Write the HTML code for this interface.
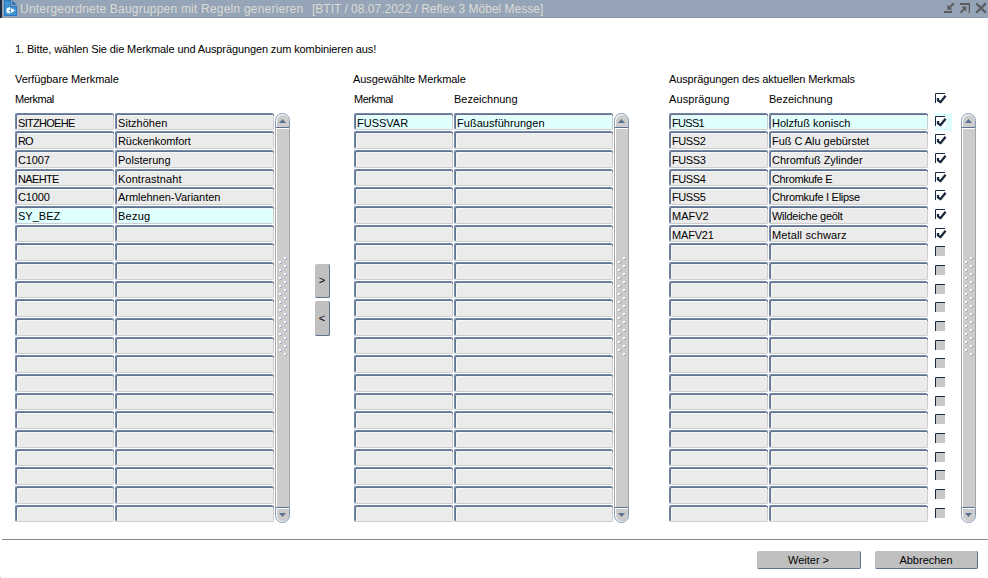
<!DOCTYPE html>
<html><head><meta charset="utf-8">
<style>
*{margin:0;padding:0;box-sizing:border-box}
html,body{width:988px;height:578px;overflow:hidden;background:#fff}
body{position:relative;font-family:"Liberation Sans",sans-serif;font-size:11px;color:#000}
.t{position:absolute;white-space:nowrap;line-height:13px}
.f{position:absolute;height:17px;border-top:1px solid #7589a6;border-left:1px solid #7589a6;border-right:1px solid #cdcdcd;border-bottom:1px solid #cdcdcd;border-radius:2px;padding-left:2px;padding-top:2px;line-height:14px;white-space:nowrap;box-shadow:inset 1px 1px 0 #5e7495, inset 2px 2px 0 #f7f7f7}
.f::after{content:'';position:absolute;right:-1px;top:0px;width:1px;height:2px;background:#5e7495;opacity:.8}
.sb{position:absolute;top:113px;width:15px;height:410px}
.sb svg{display:block}
.cb{position:absolute}
.btn{position:absolute;background:#c0c0c0;border-right:1px solid #5d7392;border-bottom:1px solid #5d7392;border-radius:2px;text-align:center;white-space:nowrap}
</style></head><body>

<div style="position:absolute;left:0;top:0;width:988px;height:17px;background:#95a4b7"></div>
<div style="position:absolute;left:0;top:17px;width:988px;height:1px;background:#8c9cb0"></div>
<div style="position:absolute;left:0;top:0;width:2px;height:18px;background:#1f2a40"></div>
<svg style="position:absolute;left:4px;top:0" width="14" height="16" viewBox="0 0 14 16"><path d="M0 0 H7 V6 H13 V16 H0 Z" fill="#2a78bc"/><path d="M1 1 H6 V7 H12 V15 H1 Z" fill="#3e93d5"/><path d="M8 0 L13 5 H8 Z" fill="#2a78bc"/><defs><clipPath id="gc"><rect x="0" y="0" width="6.2" height="16"/></clipPath></defs><g fill="#fff" clip-path="url(#gc)"><circle cx="5.3" cy="10.4" r="2.6"/><rect x="4.7" y="7.1" width="1.2" height="1.5" transform="rotate(0 5.3 10.4)"/><rect x="4.7" y="7.1" width="1.2" height="1.5" transform="rotate(-45 5.3 10.4)"/><rect x="4.7" y="7.1" width="1.2" height="1.5" transform="rotate(-90 5.3 10.4)"/><rect x="4.7" y="7.1" width="1.2" height="1.5" transform="rotate(-135 5.3 10.4)"/><rect x="4.7" y="7.1" width="1.2" height="1.5" transform="rotate(180 5.3 10.4)"/></g><circle cx="5.4" cy="10.4" r="0.75" fill="#3e93d5"/><path d="M7 8 L11 10.5 L7 13 Z" fill="#fff"/></svg>
<div class="t" style="left:20px;top:2px;font-size:12px;line-height:15px;color:#dcdcd4;letter-spacing:0.21px;">Untergeordnete Baugruppen mit Regeln generieren</div>
<div class="t" style="left:312px;top:2px;font-size:12px;line-height:15px;color:#dcdcd4;">[BTIT / 08.07.2022 / Reflex 3 Möbel Messe]</div>
<svg style="position:absolute;left:940px;top:0" width="48" height="17" viewBox="0 0 48 17"><g fill="#5c5c5c" stroke="none"><rect x="4" y="11" width="8" height="2"/><polygon points="7.3,4.6 7.3,9.7 12.4,9.7"/><rect x="20" y="3" width="10" height="2"/><rect x="28.6" y="3" width="1.4" height="10"/><polygon points="21.4,6.6 26.4,6.6 26.4,11.6"/></g><g stroke="#5c5c5c" stroke-width="2" fill="none"><path d="M13.8 3.2 L9 8"/><path d="M20.6 12.6 L25 8.2"/><path d="M36.2 3.4 L45.8 12.8 M45.8 3.4 L36.2 12.8" stroke-width="2.3"/></g></svg>
<div class="t" style="left:15px;top:43px;letter-spacing:-0.115px;">1. Bitte, wählen Sie die Merkmale und Ausprägungen zum kombinieren aus!</div>
<div class="t" style="left:15px;top:73px;letter-spacing:-0.078px;">Verfügbare Merkmale</div>
<div class="t" style="left:15px;top:93px;letter-spacing:-0.48px;">Merkmal</div>
<div class="t" style="left:353px;top:73px;letter-spacing:-0.079px;">Ausgewählte Merkmale</div>
<div class="t" style="left:354px;top:93px;letter-spacing:-0.48px;">Merkmal</div>
<div class="t" style="left:454px;top:93px;">Bezeichnung</div>
<div class="t" style="left:669px;top:73px;letter-spacing:-0.12px;">Ausprägungen des aktuellen Merkmals</div>
<div class="t" style="left:669px;top:93px;letter-spacing:0.12px;">Ausprägung</div>
<div class="t" style="left:769px;top:93px;">Bezeichnung</div>
<div class="f" style="left:15px;top:113px;width:99px;height:17px;background:#ebebeb;letter-spacing:-0.71px;">SITZHOEHE</div>
<div class="f" style="left:115px;top:113px;width:159px;height:17px;background:#ebebeb;letter-spacing:0.05px;">Sitzhöhen</div>
<div class="f" style="left:354px;top:113px;width:99px;height:17px;background:#e0ffff;">FUSSVAR</div>
<div class="f" style="left:454px;top:113px;width:159px;height:17px;background:#e0ffff;letter-spacing:0.05px;">Fußausführungen</div>
<div class="f" style="left:669px;top:113px;width:99px;height:17px;background:#e0ffff;letter-spacing:-0.7px;">FUSS1</div>
<div class="f" style="left:769px;top:113px;width:159px;height:17px;background:#e0ffff;">Holzfuß konisch</div>
<div style="position:absolute;left:935px;top:113px;width:17px;height:18px;background:#e0ffff"></div>
<svg class="cb" style="left:935px;top:116px" width="12" height="12" viewBox="0 0 12 12"><rect x="1" y="1" width="10" height="10" fill="#ffffff"/><path d="M0.5 10 V0.5 H10" fill="none" stroke="#1c2a40" stroke-width="1"/><path d="M3 5 V7.4 L5.4 9.2 L10.6 2.8" fill="none" stroke="#1c2a40" stroke-width="2.3" stroke-linejoin="round"/></svg>
<div class="f" style="left:15px;top:131px;width:99px;height:18px;background:#ebebeb;letter-spacing:-1px;">RO</div>
<div class="f" style="left:115px;top:131px;width:159px;height:18px;background:#ebebeb;letter-spacing:-0.09px;">Rückenkomfort</div>
<div class="f" style="left:354px;top:131px;width:99px;height:18px;background:#ebebeb;"></div>
<div class="f" style="left:454px;top:131px;width:159px;height:18px;background:#ebebeb;"></div>
<div class="f" style="left:669px;top:131px;width:99px;height:18px;background:#ebebeb;letter-spacing:-0.42px;">FUSS2</div>
<div class="f" style="left:769px;top:131px;width:159px;height:18px;background:#ebebeb;letter-spacing:-0.04px;">Fuß C Alu gebürstet</div>
<svg class="cb" style="left:935px;top:134px" width="12" height="12" viewBox="0 0 12 12"><rect x="1" y="1" width="10" height="10" fill="#ffffff"/><path d="M0.5 10 V0.5 H10" fill="none" stroke="#1c2a40" stroke-width="1"/><path d="M3 5 V7.4 L5.4 9.2 L10.6 2.8" fill="none" stroke="#1c2a40" stroke-width="2.3" stroke-linejoin="round"/></svg>
<div class="f" style="left:15px;top:150px;width:99px;height:18px;background:#ebebeb;letter-spacing:-0.15px;">C1007</div>
<div class="f" style="left:115px;top:150px;width:159px;height:18px;background:#ebebeb;">Polsterung</div>
<div class="f" style="left:354px;top:150px;width:99px;height:18px;background:#ebebeb;"></div>
<div class="f" style="left:454px;top:150px;width:159px;height:18px;background:#ebebeb;"></div>
<div class="f" style="left:669px;top:150px;width:99px;height:18px;background:#ebebeb;letter-spacing:-0.42px;">FUSS3</div>
<div class="f" style="left:769px;top:150px;width:159px;height:18px;background:#ebebeb;letter-spacing:-0.03px;">Chromfuß Zylinder</div>
<svg class="cb" style="left:935px;top:153px" width="12" height="12" viewBox="0 0 12 12"><rect x="1" y="1" width="10" height="10" fill="#ffffff"/><path d="M0.5 10 V0.5 H10" fill="none" stroke="#1c2a40" stroke-width="1"/><path d="M3 5 V7.4 L5.4 9.2 L10.6 2.8" fill="none" stroke="#1c2a40" stroke-width="2.3" stroke-linejoin="round"/></svg>
<div class="f" style="left:15px;top:169px;width:99px;height:17px;background:#ebebeb;letter-spacing:-0.66px;">NAEHTE</div>
<div class="f" style="left:115px;top:169px;width:159px;height:17px;background:#ebebeb;letter-spacing:0.1px;">Kontrastnaht</div>
<div class="f" style="left:354px;top:169px;width:99px;height:17px;background:#ebebeb;"></div>
<div class="f" style="left:454px;top:169px;width:159px;height:17px;background:#ebebeb;"></div>
<div class="f" style="left:669px;top:169px;width:99px;height:17px;background:#ebebeb;letter-spacing:-0.42px;">FUSS4</div>
<div class="f" style="left:769px;top:169px;width:159px;height:17px;background:#ebebeb;letter-spacing:-0.36px;">Chromkufe E</div>
<svg class="cb" style="left:935px;top:172px" width="12" height="12" viewBox="0 0 12 12"><rect x="1" y="1" width="10" height="10" fill="#ffffff"/><path d="M0.5 10 V0.5 H10" fill="none" stroke="#1c2a40" stroke-width="1"/><path d="M3 5 V7.4 L5.4 9.2 L10.6 2.8" fill="none" stroke="#1c2a40" stroke-width="2.3" stroke-linejoin="round"/></svg>
<div class="f" style="left:15px;top:187px;width:99px;height:18px;background:#ebebeb;letter-spacing:-0.15px;">C1000</div>
<div class="f" style="left:115px;top:187px;width:159px;height:18px;background:#ebebeb;letter-spacing:-0.04px;">Armlehnen-Varianten</div>
<div class="f" style="left:354px;top:187px;width:99px;height:18px;background:#ebebeb;"></div>
<div class="f" style="left:454px;top:187px;width:159px;height:18px;background:#ebebeb;"></div>
<div class="f" style="left:669px;top:187px;width:99px;height:18px;background:#ebebeb;letter-spacing:-0.42px;">FUSS5</div>
<div class="f" style="left:769px;top:187px;width:159px;height:18px;background:#ebebeb;letter-spacing:-0.28px;">Chromkufe I Elipse</div>
<svg class="cb" style="left:935px;top:190px" width="12" height="12" viewBox="0 0 12 12"><rect x="1" y="1" width="10" height="10" fill="#ffffff"/><path d="M0.5 10 V0.5 H10" fill="none" stroke="#1c2a40" stroke-width="1"/><path d="M3 5 V7.4 L5.4 9.2 L10.6 2.8" fill="none" stroke="#1c2a40" stroke-width="2.3" stroke-linejoin="round"/></svg>
<div class="f" style="left:15px;top:206px;width:99px;height:18px;background:#e0ffff;">SY_BEZ</div>
<div class="f" style="left:115px;top:206px;width:159px;height:18px;background:#e0ffff;letter-spacing:0.25px;">Bezug</div>
<div class="f" style="left:354px;top:206px;width:99px;height:18px;background:#ebebeb;"></div>
<div class="f" style="left:454px;top:206px;width:159px;height:18px;background:#ebebeb;"></div>
<div class="f" style="left:669px;top:206px;width:99px;height:18px;background:#ebebeb;">MAFV2</div>
<div class="f" style="left:769px;top:206px;width:159px;height:18px;background:#ebebeb;letter-spacing:-0.27px;">Wildeiche geölt</div>
<svg class="cb" style="left:935px;top:209px" width="12" height="12" viewBox="0 0 12 12"><rect x="1" y="1" width="10" height="10" fill="#ffffff"/><path d="M0.5 10 V0.5 H10" fill="none" stroke="#1c2a40" stroke-width="1"/><path d="M3 5 V7.4 L5.4 9.2 L10.6 2.8" fill="none" stroke="#1c2a40" stroke-width="2.3" stroke-linejoin="round"/></svg>
<div class="f" style="left:15px;top:225px;width:99px;height:17px;background:#ebebeb;"></div>
<div class="f" style="left:115px;top:225px;width:159px;height:17px;background:#ebebeb;"></div>
<div class="f" style="left:354px;top:225px;width:99px;height:17px;background:#ebebeb;"></div>
<div class="f" style="left:454px;top:225px;width:159px;height:17px;background:#ebebeb;"></div>
<div class="f" style="left:669px;top:225px;width:99px;height:17px;background:#ebebeb;letter-spacing:-0.18px;">MAFV21</div>
<div class="f" style="left:769px;top:225px;width:159px;height:17px;background:#ebebeb;letter-spacing:0.14px;">Metall schwarz</div>
<svg class="cb" style="left:935px;top:228px" width="12" height="12" viewBox="0 0 12 12"><rect x="1" y="1" width="10" height="10" fill="#ffffff"/><path d="M0.5 10 V0.5 H10" fill="none" stroke="#1c2a40" stroke-width="1"/><path d="M3 5 V7.4 L5.4 9.2 L10.6 2.8" fill="none" stroke="#1c2a40" stroke-width="2.3" stroke-linejoin="round"/></svg>
<div class="f" style="left:15px;top:243px;width:99px;height:18px;background:#ebebeb;"></div>
<div class="f" style="left:115px;top:243px;width:159px;height:18px;background:#ebebeb;"></div>
<div class="f" style="left:354px;top:243px;width:99px;height:18px;background:#ebebeb;"></div>
<div class="f" style="left:454px;top:243px;width:159px;height:18px;background:#ebebeb;"></div>
<div class="f" style="left:669px;top:243px;width:99px;height:18px;background:#ebebeb;"></div>
<div class="f" style="left:769px;top:243px;width:159px;height:18px;background:#ebebeb;"></div>
<svg class="cb" style="left:935px;top:246px" width="12" height="12" viewBox="0 0 12 12"><rect x="1" y="1" width="9" height="9" fill="#c8c8c8"/><path d="M0.5 10 V0.5 H10" fill="none" stroke="#1c2a40" stroke-width="1"/></svg>
<div class="f" style="left:15px;top:262px;width:99px;height:18px;background:#ebebeb;"></div>
<div class="f" style="left:115px;top:262px;width:159px;height:18px;background:#ebebeb;"></div>
<div class="f" style="left:354px;top:262px;width:99px;height:18px;background:#ebebeb;"></div>
<div class="f" style="left:454px;top:262px;width:159px;height:18px;background:#ebebeb;"></div>
<div class="f" style="left:669px;top:262px;width:99px;height:18px;background:#ebebeb;"></div>
<div class="f" style="left:769px;top:262px;width:159px;height:18px;background:#ebebeb;"></div>
<svg class="cb" style="left:935px;top:265px" width="12" height="12" viewBox="0 0 12 12"><rect x="1" y="1" width="9" height="9" fill="#c8c8c8"/><path d="M0.5 10 V0.5 H10" fill="none" stroke="#1c2a40" stroke-width="1"/></svg>
<div class="f" style="left:15px;top:281px;width:99px;height:17px;background:#ebebeb;"></div>
<div class="f" style="left:115px;top:281px;width:159px;height:17px;background:#ebebeb;"></div>
<div class="f" style="left:354px;top:281px;width:99px;height:17px;background:#ebebeb;"></div>
<div class="f" style="left:454px;top:281px;width:159px;height:17px;background:#ebebeb;"></div>
<div class="f" style="left:669px;top:281px;width:99px;height:17px;background:#ebebeb;"></div>
<div class="f" style="left:769px;top:281px;width:159px;height:17px;background:#ebebeb;"></div>
<svg class="cb" style="left:935px;top:284px" width="12" height="12" viewBox="0 0 12 12"><rect x="1" y="1" width="9" height="9" fill="#c8c8c8"/><path d="M0.5 10 V0.5 H10" fill="none" stroke="#1c2a40" stroke-width="1"/></svg>
<div class="f" style="left:15px;top:299px;width:99px;height:18px;background:#ebebeb;"></div>
<div class="f" style="left:115px;top:299px;width:159px;height:18px;background:#ebebeb;"></div>
<div class="f" style="left:354px;top:299px;width:99px;height:18px;background:#ebebeb;"></div>
<div class="f" style="left:454px;top:299px;width:159px;height:18px;background:#ebebeb;"></div>
<div class="f" style="left:669px;top:299px;width:99px;height:18px;background:#ebebeb;"></div>
<div class="f" style="left:769px;top:299px;width:159px;height:18px;background:#ebebeb;"></div>
<svg class="cb" style="left:935px;top:302px" width="12" height="12" viewBox="0 0 12 12"><rect x="1" y="1" width="9" height="9" fill="#c8c8c8"/><path d="M0.5 10 V0.5 H10" fill="none" stroke="#1c2a40" stroke-width="1"/></svg>
<div class="f" style="left:15px;top:318px;width:99px;height:18px;background:#ebebeb;"></div>
<div class="f" style="left:115px;top:318px;width:159px;height:18px;background:#ebebeb;"></div>
<div class="f" style="left:354px;top:318px;width:99px;height:18px;background:#ebebeb;"></div>
<div class="f" style="left:454px;top:318px;width:159px;height:18px;background:#ebebeb;"></div>
<div class="f" style="left:669px;top:318px;width:99px;height:18px;background:#ebebeb;"></div>
<div class="f" style="left:769px;top:318px;width:159px;height:18px;background:#ebebeb;"></div>
<svg class="cb" style="left:935px;top:321px" width="12" height="12" viewBox="0 0 12 12"><rect x="1" y="1" width="9" height="9" fill="#c8c8c8"/><path d="M0.5 10 V0.5 H10" fill="none" stroke="#1c2a40" stroke-width="1"/></svg>
<div class="f" style="left:15px;top:337px;width:99px;height:17px;background:#ebebeb;"></div>
<div class="f" style="left:115px;top:337px;width:159px;height:17px;background:#ebebeb;"></div>
<div class="f" style="left:354px;top:337px;width:99px;height:17px;background:#ebebeb;"></div>
<div class="f" style="left:454px;top:337px;width:159px;height:17px;background:#ebebeb;"></div>
<div class="f" style="left:669px;top:337px;width:99px;height:17px;background:#ebebeb;"></div>
<div class="f" style="left:769px;top:337px;width:159px;height:17px;background:#ebebeb;"></div>
<svg class="cb" style="left:935px;top:340px" width="12" height="12" viewBox="0 0 12 12"><rect x="1" y="1" width="9" height="9" fill="#c8c8c8"/><path d="M0.5 10 V0.5 H10" fill="none" stroke="#1c2a40" stroke-width="1"/></svg>
<div class="f" style="left:15px;top:355px;width:99px;height:18px;background:#ebebeb;"></div>
<div class="f" style="left:115px;top:355px;width:159px;height:18px;background:#ebebeb;"></div>
<div class="f" style="left:354px;top:355px;width:99px;height:18px;background:#ebebeb;"></div>
<div class="f" style="left:454px;top:355px;width:159px;height:18px;background:#ebebeb;"></div>
<div class="f" style="left:669px;top:355px;width:99px;height:18px;background:#ebebeb;"></div>
<div class="f" style="left:769px;top:355px;width:159px;height:18px;background:#ebebeb;"></div>
<svg class="cb" style="left:935px;top:358px" width="12" height="12" viewBox="0 0 12 12"><rect x="1" y="1" width="9" height="9" fill="#c8c8c8"/><path d="M0.5 10 V0.5 H10" fill="none" stroke="#1c2a40" stroke-width="1"/></svg>
<div class="f" style="left:15px;top:374px;width:99px;height:18px;background:#ebebeb;"></div>
<div class="f" style="left:115px;top:374px;width:159px;height:18px;background:#ebebeb;"></div>
<div class="f" style="left:354px;top:374px;width:99px;height:18px;background:#ebebeb;"></div>
<div class="f" style="left:454px;top:374px;width:159px;height:18px;background:#ebebeb;"></div>
<div class="f" style="left:669px;top:374px;width:99px;height:18px;background:#ebebeb;"></div>
<div class="f" style="left:769px;top:374px;width:159px;height:18px;background:#ebebeb;"></div>
<svg class="cb" style="left:935px;top:377px" width="12" height="12" viewBox="0 0 12 12"><rect x="1" y="1" width="9" height="9" fill="#c8c8c8"/><path d="M0.5 10 V0.5 H10" fill="none" stroke="#1c2a40" stroke-width="1"/></svg>
<div class="f" style="left:15px;top:393px;width:99px;height:17px;background:#ebebeb;"></div>
<div class="f" style="left:115px;top:393px;width:159px;height:17px;background:#ebebeb;"></div>
<div class="f" style="left:354px;top:393px;width:99px;height:17px;background:#ebebeb;"></div>
<div class="f" style="left:454px;top:393px;width:159px;height:17px;background:#ebebeb;"></div>
<div class="f" style="left:669px;top:393px;width:99px;height:17px;background:#ebebeb;"></div>
<div class="f" style="left:769px;top:393px;width:159px;height:17px;background:#ebebeb;"></div>
<svg class="cb" style="left:935px;top:396px" width="12" height="12" viewBox="0 0 12 12"><rect x="1" y="1" width="9" height="9" fill="#c8c8c8"/><path d="M0.5 10 V0.5 H10" fill="none" stroke="#1c2a40" stroke-width="1"/></svg>
<div class="f" style="left:15px;top:411px;width:99px;height:18px;background:#ebebeb;"></div>
<div class="f" style="left:115px;top:411px;width:159px;height:18px;background:#ebebeb;"></div>
<div class="f" style="left:354px;top:411px;width:99px;height:18px;background:#ebebeb;"></div>
<div class="f" style="left:454px;top:411px;width:159px;height:18px;background:#ebebeb;"></div>
<div class="f" style="left:669px;top:411px;width:99px;height:18px;background:#ebebeb;"></div>
<div class="f" style="left:769px;top:411px;width:159px;height:18px;background:#ebebeb;"></div>
<svg class="cb" style="left:935px;top:414px" width="12" height="12" viewBox="0 0 12 12"><rect x="1" y="1" width="9" height="9" fill="#c8c8c8"/><path d="M0.5 10 V0.5 H10" fill="none" stroke="#1c2a40" stroke-width="1"/></svg>
<div class="f" style="left:15px;top:430px;width:99px;height:18px;background:#ebebeb;"></div>
<div class="f" style="left:115px;top:430px;width:159px;height:18px;background:#ebebeb;"></div>
<div class="f" style="left:354px;top:430px;width:99px;height:18px;background:#ebebeb;"></div>
<div class="f" style="left:454px;top:430px;width:159px;height:18px;background:#ebebeb;"></div>
<div class="f" style="left:669px;top:430px;width:99px;height:18px;background:#ebebeb;"></div>
<div class="f" style="left:769px;top:430px;width:159px;height:18px;background:#ebebeb;"></div>
<svg class="cb" style="left:935px;top:433px" width="12" height="12" viewBox="0 0 12 12"><rect x="1" y="1" width="9" height="9" fill="#c8c8c8"/><path d="M0.5 10 V0.5 H10" fill="none" stroke="#1c2a40" stroke-width="1"/></svg>
<div class="f" style="left:15px;top:449px;width:99px;height:17px;background:#ebebeb;"></div>
<div class="f" style="left:115px;top:449px;width:159px;height:17px;background:#ebebeb;"></div>
<div class="f" style="left:354px;top:449px;width:99px;height:17px;background:#ebebeb;"></div>
<div class="f" style="left:454px;top:449px;width:159px;height:17px;background:#ebebeb;"></div>
<div class="f" style="left:669px;top:449px;width:99px;height:17px;background:#ebebeb;"></div>
<div class="f" style="left:769px;top:449px;width:159px;height:17px;background:#ebebeb;"></div>
<svg class="cb" style="left:935px;top:452px" width="12" height="12" viewBox="0 0 12 12"><rect x="1" y="1" width="9" height="9" fill="#c8c8c8"/><path d="M0.5 10 V0.5 H10" fill="none" stroke="#1c2a40" stroke-width="1"/></svg>
<div class="f" style="left:15px;top:467px;width:99px;height:18px;background:#ebebeb;"></div>
<div class="f" style="left:115px;top:467px;width:159px;height:18px;background:#ebebeb;"></div>
<div class="f" style="left:354px;top:467px;width:99px;height:18px;background:#ebebeb;"></div>
<div class="f" style="left:454px;top:467px;width:159px;height:18px;background:#ebebeb;"></div>
<div class="f" style="left:669px;top:467px;width:99px;height:18px;background:#ebebeb;"></div>
<div class="f" style="left:769px;top:467px;width:159px;height:18px;background:#ebebeb;"></div>
<svg class="cb" style="left:935px;top:470px" width="12" height="12" viewBox="0 0 12 12"><rect x="1" y="1" width="9" height="9" fill="#c8c8c8"/><path d="M0.5 10 V0.5 H10" fill="none" stroke="#1c2a40" stroke-width="1"/></svg>
<div class="f" style="left:15px;top:486px;width:99px;height:18px;background:#ebebeb;"></div>
<div class="f" style="left:115px;top:486px;width:159px;height:18px;background:#ebebeb;"></div>
<div class="f" style="left:354px;top:486px;width:99px;height:18px;background:#ebebeb;"></div>
<div class="f" style="left:454px;top:486px;width:159px;height:18px;background:#ebebeb;"></div>
<div class="f" style="left:669px;top:486px;width:99px;height:18px;background:#ebebeb;"></div>
<div class="f" style="left:769px;top:486px;width:159px;height:18px;background:#ebebeb;"></div>
<svg class="cb" style="left:935px;top:489px" width="12" height="12" viewBox="0 0 12 12"><rect x="1" y="1" width="9" height="9" fill="#c8c8c8"/><path d="M0.5 10 V0.5 H10" fill="none" stroke="#1c2a40" stroke-width="1"/></svg>
<div class="f" style="left:15px;top:505px;width:99px;height:17px;background:#ebebeb;"></div>
<div class="f" style="left:115px;top:505px;width:159px;height:17px;background:#ebebeb;"></div>
<div class="f" style="left:354px;top:505px;width:99px;height:17px;background:#ebebeb;"></div>
<div class="f" style="left:454px;top:505px;width:159px;height:17px;background:#ebebeb;"></div>
<div class="f" style="left:669px;top:505px;width:99px;height:17px;background:#ebebeb;"></div>
<div class="f" style="left:769px;top:505px;width:159px;height:17px;background:#ebebeb;"></div>
<svg class="cb" style="left:935px;top:508px" width="12" height="12" viewBox="0 0 12 12"><rect x="1" y="1" width="9" height="9" fill="#c8c8c8"/><path d="M0.5 10 V0.5 H10" fill="none" stroke="#1c2a40" stroke-width="1"/></svg>
<svg class="cb" style="left:935px;top:93px" width="12" height="12" viewBox="0 0 12 12"><rect x="1" y="1" width="10" height="10" fill="#ffffff"/><path d="M0.5 10 V0.5 H10" fill="none" stroke="#1c2a40" stroke-width="1"/><path d="M3 5 V7.4 L5.4 9.2 L10.6 2.8" fill="none" stroke="#1c2a40" stroke-width="2.3" stroke-linejoin="round"/></svg>
<div class="sb" style="left:275px"><svg width="15" height="410" viewBox="0 0 15 410" shape-rendering="auto"><rect x="0" y="14" width="15" height="382" fill="#cccccc"/><rect x="0" y="14" width="1" height="382" fill="#a6a6a6"/><rect x="1" y="14" width="1" height="382" fill="#ffffff"/><rect x="14" y="14" width="1" height="382" fill="#a6a6a6"/><path d="M0.5 14 V7.5 A7 7 0 0 1 14.5 7.5 V14 Z" fill="#fff"/><path d="M2 14 V8 A6 6 0 0 1 14 8 V14 Z" fill="#cccccc"/><path d="M0.5 14.5 V7.5 A7 7 0 0 1 14.5 7.5 V14.5" fill="none" stroke="#8497b0"/><rect x="1" y="14" width="13" height="1" fill="#5b7194"/><rect x="1" y="15" width="13" height="1" fill="#fff"/><path d="M4 10 L7.5 6 L11 10 Z" fill="#5b7194"/><path d="M0.5 394 V402.5 A7 7 0 0 0 14.5 402.5 V394 Z" fill="#fff"/><path d="M2 396 V402.5 A6 6 0 0 0 14 402.5 V396 Z" fill="#cccccc"/><path d="M0.5 394.5 V402.5 A7 7 0 0 0 14.5 402.5 V394.5" fill="none" stroke="#8497b0"/><rect x="1" y="394" width="13" height="1" fill="#5b7194"/><rect x="1" y="395" width="13" height="1" fill="#fff"/><path d="M4 400 L7.5 404 L11 400 Z" fill="#5b7194"/><rect x="9" y="144" width="2" height="2" fill="#fff"/><rect x="11" y="145" width="1" height="1" fill="#8093b3"/><rect x="10" y="146" width="1" height="1" fill="#8093b3"/><rect x="9" y="152" width="2" height="2" fill="#fff"/><rect x="11" y="153" width="1" height="1" fill="#8093b3"/><rect x="10" y="154" width="1" height="1" fill="#8093b3"/><rect x="9" y="160" width="2" height="2" fill="#fff"/><rect x="11" y="161" width="1" height="1" fill="#8093b3"/><rect x="10" y="162" width="1" height="1" fill="#8093b3"/><rect x="9" y="168" width="2" height="2" fill="#fff"/><rect x="11" y="169" width="1" height="1" fill="#8093b3"/><rect x="10" y="170" width="1" height="1" fill="#8093b3"/><rect x="9" y="176" width="2" height="2" fill="#fff"/><rect x="11" y="177" width="1" height="1" fill="#8093b3"/><rect x="10" y="178" width="1" height="1" fill="#8093b3"/><rect x="9" y="184" width="2" height="2" fill="#fff"/><rect x="11" y="185" width="1" height="1" fill="#8093b3"/><rect x="10" y="186" width="1" height="1" fill="#8093b3"/><rect x="9" y="192" width="2" height="2" fill="#fff"/><rect x="11" y="193" width="1" height="1" fill="#8093b3"/><rect x="10" y="194" width="1" height="1" fill="#8093b3"/><rect x="9" y="200" width="2" height="2" fill="#fff"/><rect x="11" y="201" width="1" height="1" fill="#8093b3"/><rect x="10" y="202" width="1" height="1" fill="#8093b3"/><rect x="9" y="208" width="2" height="2" fill="#fff"/><rect x="11" y="209" width="1" height="1" fill="#8093b3"/><rect x="10" y="210" width="1" height="1" fill="#8093b3"/><rect x="9" y="216" width="2" height="2" fill="#fff"/><rect x="11" y="217" width="1" height="1" fill="#8093b3"/><rect x="10" y="218" width="1" height="1" fill="#8093b3"/><rect x="9" y="224" width="2" height="2" fill="#fff"/><rect x="11" y="225" width="1" height="1" fill="#8093b3"/><rect x="10" y="226" width="1" height="1" fill="#8093b3"/><rect x="9" y="232" width="2" height="2" fill="#fff"/><rect x="11" y="233" width="1" height="1" fill="#8093b3"/><rect x="10" y="234" width="1" height="1" fill="#8093b3"/><rect x="9" y="240" width="2" height="2" fill="#fff"/><rect x="11" y="241" width="1" height="1" fill="#8093b3"/><rect x="10" y="242" width="1" height="1" fill="#8093b3"/><rect x="4" y="148" width="2" height="2" fill="#fff"/><rect x="6" y="149" width="1" height="1" fill="#8093b3"/><rect x="5" y="150" width="1" height="1" fill="#8093b3"/><rect x="4" y="156" width="2" height="2" fill="#fff"/><rect x="6" y="157" width="1" height="1" fill="#8093b3"/><rect x="5" y="158" width="1" height="1" fill="#8093b3"/><rect x="4" y="164" width="2" height="2" fill="#fff"/><rect x="6" y="165" width="1" height="1" fill="#8093b3"/><rect x="5" y="166" width="1" height="1" fill="#8093b3"/><rect x="4" y="172" width="2" height="2" fill="#fff"/><rect x="6" y="173" width="1" height="1" fill="#8093b3"/><rect x="5" y="174" width="1" height="1" fill="#8093b3"/><rect x="4" y="180" width="2" height="2" fill="#fff"/><rect x="6" y="181" width="1" height="1" fill="#8093b3"/><rect x="5" y="182" width="1" height="1" fill="#8093b3"/><rect x="4" y="188" width="2" height="2" fill="#fff"/><rect x="6" y="189" width="1" height="1" fill="#8093b3"/><rect x="5" y="190" width="1" height="1" fill="#8093b3"/><rect x="4" y="196" width="2" height="2" fill="#fff"/><rect x="6" y="197" width="1" height="1" fill="#8093b3"/><rect x="5" y="198" width="1" height="1" fill="#8093b3"/><rect x="4" y="204" width="2" height="2" fill="#fff"/><rect x="6" y="205" width="1" height="1" fill="#8093b3"/><rect x="5" y="206" width="1" height="1" fill="#8093b3"/><rect x="4" y="212" width="2" height="2" fill="#fff"/><rect x="6" y="213" width="1" height="1" fill="#8093b3"/><rect x="5" y="214" width="1" height="1" fill="#8093b3"/><rect x="4" y="220" width="2" height="2" fill="#fff"/><rect x="6" y="221" width="1" height="1" fill="#8093b3"/><rect x="5" y="222" width="1" height="1" fill="#8093b3"/><rect x="4" y="228" width="2" height="2" fill="#fff"/><rect x="6" y="229" width="1" height="1" fill="#8093b3"/><rect x="5" y="230" width="1" height="1" fill="#8093b3"/><rect x="4" y="236" width="2" height="2" fill="#fff"/><rect x="6" y="237" width="1" height="1" fill="#8093b3"/><rect x="5" y="238" width="1" height="1" fill="#8093b3"/></svg></div>
<div class="sb" style="left:614px"><svg width="15" height="410" viewBox="0 0 15 410" shape-rendering="auto"><rect x="0" y="14" width="15" height="382" fill="#cccccc"/><rect x="0" y="14" width="1" height="382" fill="#a6a6a6"/><rect x="1" y="14" width="1" height="382" fill="#ffffff"/><rect x="14" y="14" width="1" height="382" fill="#a6a6a6"/><path d="M0.5 14 V7.5 A7 7 0 0 1 14.5 7.5 V14 Z" fill="#fff"/><path d="M2 14 V8 A6 6 0 0 1 14 8 V14 Z" fill="#cccccc"/><path d="M0.5 14.5 V7.5 A7 7 0 0 1 14.5 7.5 V14.5" fill="none" stroke="#8497b0"/><rect x="1" y="14" width="13" height="1" fill="#5b7194"/><rect x="1" y="15" width="13" height="1" fill="#fff"/><path d="M4 10 L7.5 6 L11 10 Z" fill="#5b7194"/><path d="M0.5 394 V402.5 A7 7 0 0 0 14.5 402.5 V394 Z" fill="#fff"/><path d="M2 396 V402.5 A6 6 0 0 0 14 402.5 V396 Z" fill="#cccccc"/><path d="M0.5 394.5 V402.5 A7 7 0 0 0 14.5 402.5 V394.5" fill="none" stroke="#8497b0"/><rect x="1" y="394" width="13" height="1" fill="#5b7194"/><rect x="1" y="395" width="13" height="1" fill="#fff"/><path d="M4 400 L7.5 404 L11 400 Z" fill="#5b7194"/><rect x="9" y="144" width="2" height="2" fill="#fff"/><rect x="11" y="145" width="1" height="1" fill="#8093b3"/><rect x="10" y="146" width="1" height="1" fill="#8093b3"/><rect x="9" y="152" width="2" height="2" fill="#fff"/><rect x="11" y="153" width="1" height="1" fill="#8093b3"/><rect x="10" y="154" width="1" height="1" fill="#8093b3"/><rect x="9" y="160" width="2" height="2" fill="#fff"/><rect x="11" y="161" width="1" height="1" fill="#8093b3"/><rect x="10" y="162" width="1" height="1" fill="#8093b3"/><rect x="9" y="168" width="2" height="2" fill="#fff"/><rect x="11" y="169" width="1" height="1" fill="#8093b3"/><rect x="10" y="170" width="1" height="1" fill="#8093b3"/><rect x="9" y="176" width="2" height="2" fill="#fff"/><rect x="11" y="177" width="1" height="1" fill="#8093b3"/><rect x="10" y="178" width="1" height="1" fill="#8093b3"/><rect x="9" y="184" width="2" height="2" fill="#fff"/><rect x="11" y="185" width="1" height="1" fill="#8093b3"/><rect x="10" y="186" width="1" height="1" fill="#8093b3"/><rect x="9" y="192" width="2" height="2" fill="#fff"/><rect x="11" y="193" width="1" height="1" fill="#8093b3"/><rect x="10" y="194" width="1" height="1" fill="#8093b3"/><rect x="9" y="200" width="2" height="2" fill="#fff"/><rect x="11" y="201" width="1" height="1" fill="#8093b3"/><rect x="10" y="202" width="1" height="1" fill="#8093b3"/><rect x="9" y="208" width="2" height="2" fill="#fff"/><rect x="11" y="209" width="1" height="1" fill="#8093b3"/><rect x="10" y="210" width="1" height="1" fill="#8093b3"/><rect x="9" y="216" width="2" height="2" fill="#fff"/><rect x="11" y="217" width="1" height="1" fill="#8093b3"/><rect x="10" y="218" width="1" height="1" fill="#8093b3"/><rect x="9" y="224" width="2" height="2" fill="#fff"/><rect x="11" y="225" width="1" height="1" fill="#8093b3"/><rect x="10" y="226" width="1" height="1" fill="#8093b3"/><rect x="9" y="232" width="2" height="2" fill="#fff"/><rect x="11" y="233" width="1" height="1" fill="#8093b3"/><rect x="10" y="234" width="1" height="1" fill="#8093b3"/><rect x="9" y="240" width="2" height="2" fill="#fff"/><rect x="11" y="241" width="1" height="1" fill="#8093b3"/><rect x="10" y="242" width="1" height="1" fill="#8093b3"/><rect x="4" y="148" width="2" height="2" fill="#fff"/><rect x="6" y="149" width="1" height="1" fill="#8093b3"/><rect x="5" y="150" width="1" height="1" fill="#8093b3"/><rect x="4" y="156" width="2" height="2" fill="#fff"/><rect x="6" y="157" width="1" height="1" fill="#8093b3"/><rect x="5" y="158" width="1" height="1" fill="#8093b3"/><rect x="4" y="164" width="2" height="2" fill="#fff"/><rect x="6" y="165" width="1" height="1" fill="#8093b3"/><rect x="5" y="166" width="1" height="1" fill="#8093b3"/><rect x="4" y="172" width="2" height="2" fill="#fff"/><rect x="6" y="173" width="1" height="1" fill="#8093b3"/><rect x="5" y="174" width="1" height="1" fill="#8093b3"/><rect x="4" y="180" width="2" height="2" fill="#fff"/><rect x="6" y="181" width="1" height="1" fill="#8093b3"/><rect x="5" y="182" width="1" height="1" fill="#8093b3"/><rect x="4" y="188" width="2" height="2" fill="#fff"/><rect x="6" y="189" width="1" height="1" fill="#8093b3"/><rect x="5" y="190" width="1" height="1" fill="#8093b3"/><rect x="4" y="196" width="2" height="2" fill="#fff"/><rect x="6" y="197" width="1" height="1" fill="#8093b3"/><rect x="5" y="198" width="1" height="1" fill="#8093b3"/><rect x="4" y="204" width="2" height="2" fill="#fff"/><rect x="6" y="205" width="1" height="1" fill="#8093b3"/><rect x="5" y="206" width="1" height="1" fill="#8093b3"/><rect x="4" y="212" width="2" height="2" fill="#fff"/><rect x="6" y="213" width="1" height="1" fill="#8093b3"/><rect x="5" y="214" width="1" height="1" fill="#8093b3"/><rect x="4" y="220" width="2" height="2" fill="#fff"/><rect x="6" y="221" width="1" height="1" fill="#8093b3"/><rect x="5" y="222" width="1" height="1" fill="#8093b3"/><rect x="4" y="228" width="2" height="2" fill="#fff"/><rect x="6" y="229" width="1" height="1" fill="#8093b3"/><rect x="5" y="230" width="1" height="1" fill="#8093b3"/><rect x="4" y="236" width="2" height="2" fill="#fff"/><rect x="6" y="237" width="1" height="1" fill="#8093b3"/><rect x="5" y="238" width="1" height="1" fill="#8093b3"/></svg></div>
<div class="sb" style="left:961px"><svg width="15" height="410" viewBox="0 0 15 410" shape-rendering="auto"><rect x="0" y="14" width="15" height="382" fill="#cccccc"/><rect x="0" y="14" width="1" height="382" fill="#a6a6a6"/><rect x="1" y="14" width="1" height="382" fill="#ffffff"/><rect x="14" y="14" width="1" height="382" fill="#a6a6a6"/><path d="M0.5 14 V7.5 A7 7 0 0 1 14.5 7.5 V14 Z" fill="#fff"/><path d="M2 14 V8 A6 6 0 0 1 14 8 V14 Z" fill="#cccccc"/><path d="M0.5 14.5 V7.5 A7 7 0 0 1 14.5 7.5 V14.5" fill="none" stroke="#8497b0"/><rect x="1" y="14" width="13" height="1" fill="#5b7194"/><rect x="1" y="15" width="13" height="1" fill="#fff"/><path d="M4 10 L7.5 6 L11 10 Z" fill="#5b7194"/><path d="M0.5 394 V402.5 A7 7 0 0 0 14.5 402.5 V394 Z" fill="#fff"/><path d="M2 396 V402.5 A6 6 0 0 0 14 402.5 V396 Z" fill="#cccccc"/><path d="M0.5 394.5 V402.5 A7 7 0 0 0 14.5 402.5 V394.5" fill="none" stroke="#8497b0"/><rect x="1" y="394" width="13" height="1" fill="#5b7194"/><rect x="1" y="395" width="13" height="1" fill="#fff"/><path d="M4 400 L7.5 404 L11 400 Z" fill="#5b7194"/><rect x="9" y="144" width="2" height="2" fill="#fff"/><rect x="11" y="145" width="1" height="1" fill="#8093b3"/><rect x="10" y="146" width="1" height="1" fill="#8093b3"/><rect x="9" y="152" width="2" height="2" fill="#fff"/><rect x="11" y="153" width="1" height="1" fill="#8093b3"/><rect x="10" y="154" width="1" height="1" fill="#8093b3"/><rect x="9" y="160" width="2" height="2" fill="#fff"/><rect x="11" y="161" width="1" height="1" fill="#8093b3"/><rect x="10" y="162" width="1" height="1" fill="#8093b3"/><rect x="9" y="168" width="2" height="2" fill="#fff"/><rect x="11" y="169" width="1" height="1" fill="#8093b3"/><rect x="10" y="170" width="1" height="1" fill="#8093b3"/><rect x="9" y="176" width="2" height="2" fill="#fff"/><rect x="11" y="177" width="1" height="1" fill="#8093b3"/><rect x="10" y="178" width="1" height="1" fill="#8093b3"/><rect x="9" y="184" width="2" height="2" fill="#fff"/><rect x="11" y="185" width="1" height="1" fill="#8093b3"/><rect x="10" y="186" width="1" height="1" fill="#8093b3"/><rect x="9" y="192" width="2" height="2" fill="#fff"/><rect x="11" y="193" width="1" height="1" fill="#8093b3"/><rect x="10" y="194" width="1" height="1" fill="#8093b3"/><rect x="9" y="200" width="2" height="2" fill="#fff"/><rect x="11" y="201" width="1" height="1" fill="#8093b3"/><rect x="10" y="202" width="1" height="1" fill="#8093b3"/><rect x="9" y="208" width="2" height="2" fill="#fff"/><rect x="11" y="209" width="1" height="1" fill="#8093b3"/><rect x="10" y="210" width="1" height="1" fill="#8093b3"/><rect x="9" y="216" width="2" height="2" fill="#fff"/><rect x="11" y="217" width="1" height="1" fill="#8093b3"/><rect x="10" y="218" width="1" height="1" fill="#8093b3"/><rect x="9" y="224" width="2" height="2" fill="#fff"/><rect x="11" y="225" width="1" height="1" fill="#8093b3"/><rect x="10" y="226" width="1" height="1" fill="#8093b3"/><rect x="9" y="232" width="2" height="2" fill="#fff"/><rect x="11" y="233" width="1" height="1" fill="#8093b3"/><rect x="10" y="234" width="1" height="1" fill="#8093b3"/><rect x="9" y="240" width="2" height="2" fill="#fff"/><rect x="11" y="241" width="1" height="1" fill="#8093b3"/><rect x="10" y="242" width="1" height="1" fill="#8093b3"/><rect x="4" y="148" width="2" height="2" fill="#fff"/><rect x="6" y="149" width="1" height="1" fill="#8093b3"/><rect x="5" y="150" width="1" height="1" fill="#8093b3"/><rect x="4" y="156" width="2" height="2" fill="#fff"/><rect x="6" y="157" width="1" height="1" fill="#8093b3"/><rect x="5" y="158" width="1" height="1" fill="#8093b3"/><rect x="4" y="164" width="2" height="2" fill="#fff"/><rect x="6" y="165" width="1" height="1" fill="#8093b3"/><rect x="5" y="166" width="1" height="1" fill="#8093b3"/><rect x="4" y="172" width="2" height="2" fill="#fff"/><rect x="6" y="173" width="1" height="1" fill="#8093b3"/><rect x="5" y="174" width="1" height="1" fill="#8093b3"/><rect x="4" y="180" width="2" height="2" fill="#fff"/><rect x="6" y="181" width="1" height="1" fill="#8093b3"/><rect x="5" y="182" width="1" height="1" fill="#8093b3"/><rect x="4" y="188" width="2" height="2" fill="#fff"/><rect x="6" y="189" width="1" height="1" fill="#8093b3"/><rect x="5" y="190" width="1" height="1" fill="#8093b3"/><rect x="4" y="196" width="2" height="2" fill="#fff"/><rect x="6" y="197" width="1" height="1" fill="#8093b3"/><rect x="5" y="198" width="1" height="1" fill="#8093b3"/><rect x="4" y="204" width="2" height="2" fill="#fff"/><rect x="6" y="205" width="1" height="1" fill="#8093b3"/><rect x="5" y="206" width="1" height="1" fill="#8093b3"/><rect x="4" y="212" width="2" height="2" fill="#fff"/><rect x="6" y="213" width="1" height="1" fill="#8093b3"/><rect x="5" y="214" width="1" height="1" fill="#8093b3"/><rect x="4" y="220" width="2" height="2" fill="#fff"/><rect x="6" y="221" width="1" height="1" fill="#8093b3"/><rect x="5" y="222" width="1" height="1" fill="#8093b3"/><rect x="4" y="228" width="2" height="2" fill="#fff"/><rect x="6" y="229" width="1" height="1" fill="#8093b3"/><rect x="5" y="230" width="1" height="1" fill="#8093b3"/><rect x="4" y="236" width="2" height="2" fill="#fff"/><rect x="6" y="237" width="1" height="1" fill="#8093b3"/><rect x="5" y="238" width="1" height="1" fill="#8093b3"/></svg></div>
<div class="btn" style="left:315px;top:264px;width:15px;height:34px;line-height:33px">&gt;</div>
<div class="btn" style="left:315px;top:301px;width:15px;height:35px;line-height:34px">&lt;</div>
<div style="position:absolute;left:2px;top:539px;width:986px;height:1px;background:#8a8a8a"></div>
<div class="btn" style="left:757px;top:551px;width:104px;height:18px;line-height:17px;padding-top:1px">Weiter &gt;</div>
<div class="btn" style="left:875px;top:551px;width:103px;height:18px;line-height:17px;padding-top:1px">Abbrechen</div>
<div style="position:absolute;left:0;top:577px;width:1px;height:1px;background:#c4c4c4"></div>
</body></html>
